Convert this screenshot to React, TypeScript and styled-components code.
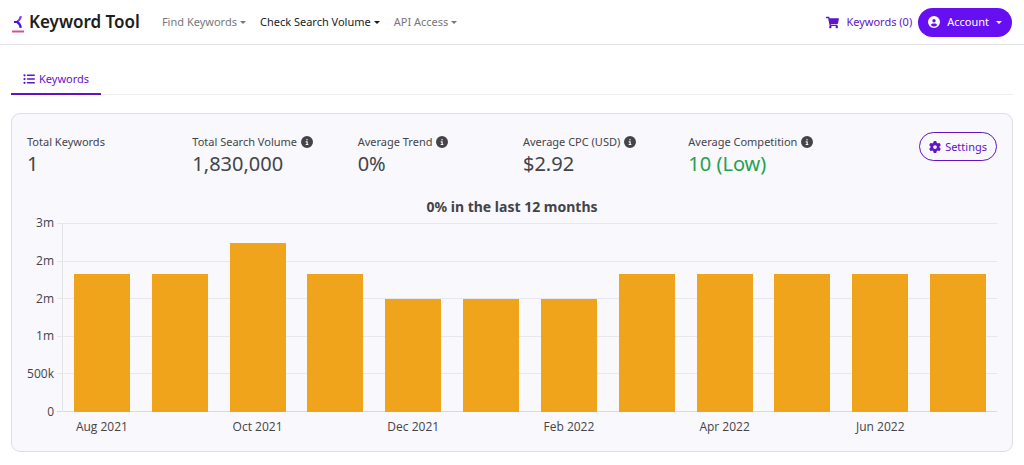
import React from 'react';
import styled, { createGlobalStyle } from 'styled-components';
import { FaCircleInfo, FaCircleUser, FaGear, FaListUl } from 'react-icons/fa6';
import { FaShoppingCart } from 'react-icons/fa';

const GlobalStyle = createGlobalStyle`
  *, *::before, *::after { box-sizing: border-box; }
  body {
    margin: 0;
    background: #ffffff;
    color: #444448;
    font-family: "Noto Sans", "Segoe UI", sans-serif;
    font-size: 11px;
    line-height: 16px;
  }
  button { font: inherit; cursor: pointer; }
`;

const purple = '#5f14c8';

const Header = styled.header`
  display: flex;
  align-items: center;
  height: 45px;
  padding: 0 12px;
  border-bottom: 1px solid #e4e4e6;
`;

const Brand = styled.a`
  display: flex;
  align-items: center;
  gap: 5px;
  margin-right: 22px;
  color: #1d1d20;
  font-size: 17px;
  font-weight: 600;
  line-height: 24px;
  text-decoration: none;
  white-space: nowrap;
`;

const Nav = styled.nav`
  display: flex;
  gap: 14px;
`;

const NavButton = styled.button<{ $active?: boolean }>`
  display: flex;
  align-items: center;
  gap: 3px;
  padding: 0;
  border: 0;
  background: none;
  color: ${(p) => (p.$active ? '#1a1a1c' : '#77777a')};
  white-space: nowrap;
`;

const Caret = styled.span`
  border-top: 3px solid currentColor;
  border-left: 3px solid transparent;
  border-right: 3px solid transparent;
`;

const HeaderActions = styled.div`
  display: flex;
  align-items: center;
  gap: 6px;
  margin-left: auto;
`;

const CartLink = styled.a`
  display: flex;
  align-items: center;
  gap: 7px;
  color: ${purple};
  text-decoration: none;
  white-space: nowrap;
`;

const AccountButton = styled.button`
  display: flex;
  align-items: center;
  gap: 7px;
  height: 29px;
  padding: 0 10px;
  border: 0;
  border-radius: 15px;
  background: #6610f2;
  color: #ffffff;
`;

const Main = styled.main`
  padding: 19px 11px 12px;
`;

const Tabs = styled.nav`
  display: flex;
  margin-bottom: 18px;
  border-bottom: 1px solid #ededf0;
`;

const Tab = styled.a`
  display: flex;
  align-items: center;
  gap: 4px;
  height: 31px;
  margin-bottom: -1px;
  padding: 0 12px;
  border-bottom: 2px solid ${purple};
  color: ${purple};
  text-decoration: none;
`;

const Card = styled.section`
  padding: 18px 15px 16px;
  border: 1px solid #dedee3;
  border-radius: 9px;
  background: #f8f8fd;
`;

const Stats = styled.div`
  display: grid;
  grid-template-columns: repeat(6, 1fr);
  column-gap: 22px;
  align-items: start;
`;

const Stat = styled.div`
  padding-top: 2px;
`;

const StatLabel = styled.div`
  display: flex;
  align-items: center;
  gap: 4px;
  white-space: nowrap;
`;

const StatValue = styled.div<{ $positive?: boolean }>`
  color: ${(p) => (p.$positive ? '#1fa352' : 'inherit')};
  font-size: 20px;
  line-height: 28px;
`;

const SettingsButton = styled.button`
  display: flex;
  align-items: center;
  justify-self: end;
  gap: 4px;
  height: 29px;
  padding: 0 9px;
  border: 1px solid ${purple};
  border-radius: 15px;
  background: transparent;
  color: ${purple};
`;

const ChartTitle = styled.h2`
  margin: 20px 0 7px;
  font-size: 14px;
  font-weight: 700;
  line-height: 18px;
  text-align: center;
`;

const Chart = styled.div`
  display: grid;
  grid-template-columns: 27px 1fr;
  column-gap: 3px;
  font-family: "Open Sans", "Segoe UI", sans-serif;
  font-size: 12px;
`;

const YAxis = styled.div`
  display: flex;
  flex-direction: column;
  justify-content: space-between;
  margin: -8px 0;
  text-align: right;
`;

const Plot = styled.div`
  display: grid;
  grid-template: 189px / 1fr;
`;

const GridLines = styled.div`
  grid-area: 1 / 1;
  display: flex;
  flex-direction: column;
  justify-content: space-between;
`;

const GridLine = styled.div<{ $base?: boolean }>`
  height: 1px;
  background: ${(p) => (p.$base ? '#d9d9de' : '#e7e7ec')};
`;

const Bars = styled.div`
  grid-area: 1 / 1;
  display: grid;
  grid-template-columns: repeat(12, 1fr);
  align-items: end;
  margin-left: 5px;
  border-left: 1px solid #e3e3e8;
`;

const Bar = styled.div`
  width: 72%;
  margin: 0 auto;
  background: #f0a41c;
`;

const XAxis = styled.div`
  grid-column: 2;
  display: grid;
  grid-template-columns: repeat(12, 1fr);
  margin: 7px 0 0 6px;
  text-align: center;
  white-space: nowrap;
`;

const stats = [
  { label: 'Total Keywords', value: '1' },
  { label: 'Total Search Volume', value: '1,830,000', info: true },
  { label: 'Average Trend', value: '0%', info: true },
  { label: 'Average CPC (USD)', value: '$2.92', info: true },
  { label: 'Average Competition', value: '10 (Low)', info: true, positive: true },
];

const maxVolume = 2500000;
const ticks = ['3m', '2m', '2m', '1m', '500k', '0'];
const months = [
  { label: 'Aug 2021', volume: 1830000 },
  { label: '', volume: 1830000 },
  { label: 'Oct 2021', volume: 2240000 },
  { label: '', volume: 1830000 },
  { label: 'Dec 2021', volume: 1500000 },
  { label: '', volume: 1500000 },
  { label: 'Feb 2022', volume: 1500000 },
  { label: '', volume: 1830000 },
  { label: 'Apr 2022', volume: 1830000 },
  { label: '', volume: 1830000 },
  { label: 'Jun 2022', volume: 1830000 },
  { label: '', volume: 1830000 },
];

function LogoMark() {
  return (
    <svg width="12" height="22" viewBox="0 0 12 22" fill="none" aria-hidden="true">
      <path d="M8.8 5.2 C8.6 7.6 7 9.6 4.6 11" stroke="#7d3cec" strokeWidth="2" />
      <path d="M2 11 H5 C7 12 8.4 14 8.8 16.8" stroke="#4a14d8" strokeWidth="2.2" />
      <path d="M0 20.5 H12" stroke="#d9508c" strokeWidth="2" />
    </svg>
  );
}

export default function App() {
  return (
    <>
      <GlobalStyle />
      <Header>
        <Brand href="#">
          <LogoMark />
          Keyword Tool
        </Brand>
        <Nav aria-label="Main">
          <NavButton>Find Keywords<Caret /></NavButton>
          <NavButton $active>Check Search Volume<Caret /></NavButton>
          <NavButton>API Access<Caret /></NavButton>
        </Nav>
        <HeaderActions>
          <CartLink href="#cart"><FaShoppingCart size={13} />Keywords (0)</CartLink>
          <AccountButton><FaCircleUser size={12} />Account<Caret /></AccountButton>
        </HeaderActions>
      </Header>
      <Main>
        <Tabs aria-label="Results">
          <Tab href="#keywords"><FaListUl size={12} />Keywords</Tab>
        </Tabs>
        <Card>
          <Stats>
            {stats.map((s) => (
              <Stat key={s.label}>
                <StatLabel>{s.label}{s.info && <FaCircleInfo size={12} />}</StatLabel>
                <StatValue $positive={s.positive}>{s.value}</StatValue>
              </Stat>
            ))}
            <SettingsButton><FaGear size={12} />Settings</SettingsButton>
          </Stats>
          <ChartTitle>0% in the last 12 months</ChartTitle>
          <Chart>
            <YAxis>
              {ticks.map((t, i) => <span key={i}>{t}</span>)}
            </YAxis>
            <Plot>
              <GridLines>
                {ticks.map((_, i) => <GridLine key={i} $base={i === ticks.length - 1} />)}
              </GridLines>
              <Bars>
                {months.map((m, i) => (
                  <Bar key={i} style={{ height: `${(m.volume / maxVolume) * 100}%` }} />
                ))}
              </Bars>
            </Plot>
            <XAxis>
              {months.map((m, i) => <span key={i}>{m.label}</span>)}
            </XAxis>
          </Chart>
        </Card>
      </Main>
    </>
  );
}
